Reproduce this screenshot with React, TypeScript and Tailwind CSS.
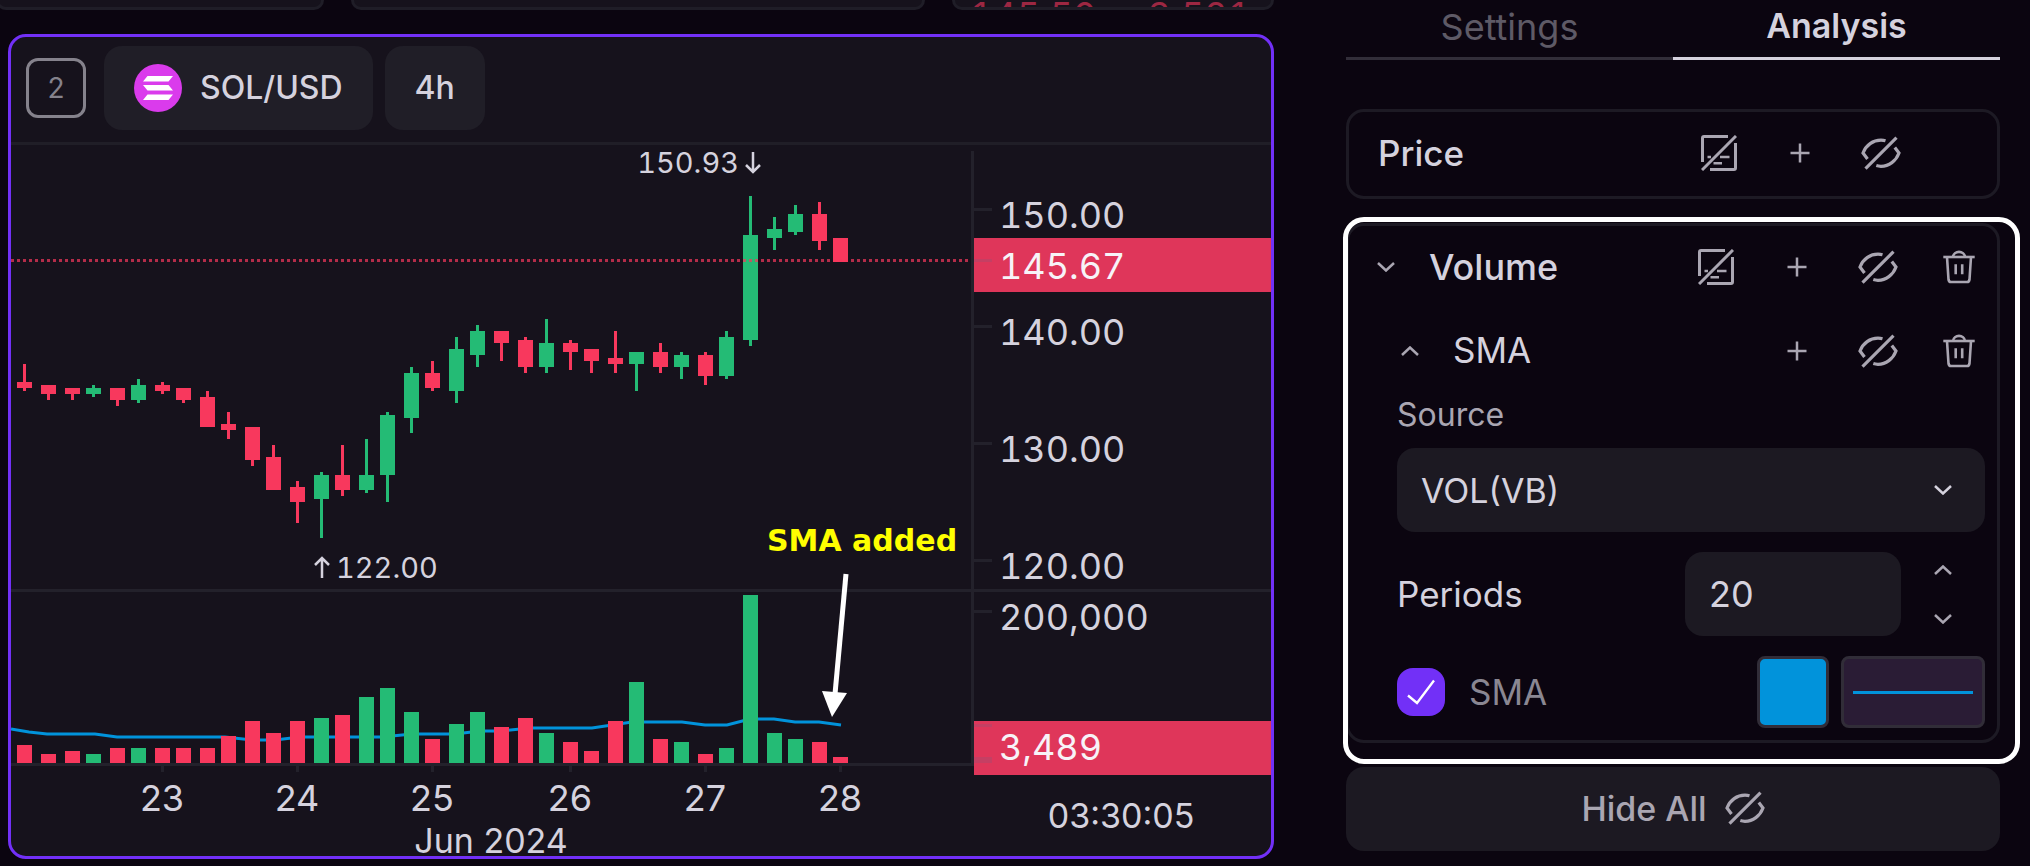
import { useState } from "react";
import type { ReactNode } from "react";

type Candle = {
  x: number;
  up: boolean;
  high: number;
  top: number;
  bottom: number;
  low: number;
  vol: number;
};

// x, direction, high, body top, body bottom, low, volume top
const rows: [number, 0 | 1, number, number, number, number, number][] = [
  [17, 0, 364, 382, 388, 391, 745],
  [41, 0, 385, 385, 394, 400, 754],
  [65, 0, 388, 388, 394, 400, 751],
  [86, 1, 385, 388, 394, 397, 754],
  [110, 0, 388, 388, 400, 406, 748],
  [131, 1, 379, 385, 400, 403, 748],
  [155, 0, 382, 385, 391, 394, 748],
  [176, 0, 388, 388, 400, 403, 748],
  [200, 0, 391, 397, 427, 427, 748],
  [221, 0, 412, 424, 430, 439, 736],
  [245, 0, 427, 427, 460, 466, 721],
  [266, 0, 445, 457, 490, 490, 733],
  [290, 0, 481, 487, 502, 523, 721],
  [314, 1, 472, 475, 499, 538, 718],
  [335, 0, 445, 475, 490, 496, 715],
  [359, 1, 439, 475, 490, 493, 697],
  [380, 1, 412, 415, 475, 502, 688],
  [404, 1, 367, 373, 418, 433, 712],
  [425, 0, 361, 373, 388, 391, 739],
  [449, 1, 337, 349, 391, 403, 724],
  [470, 1, 325, 331, 355, 367, 712],
  [494, 0, 331, 331, 343, 361, 727],
  [518, 0, 337, 340, 367, 373, 718],
  [539, 1, 319, 343, 367, 373, 733],
  [563, 0, 340, 343, 352, 370, 742],
  [584, 0, 349, 349, 361, 373, 751],
  [608, 0, 331, 358, 364, 373, 721],
  [629, 1, 352, 352, 364, 391, 682],
  [653, 0, 343, 352, 367, 373, 739],
  [674, 1, 352, 355, 367, 379, 742],
  [698, 0, 352, 355, 376, 385, 754],
  [719, 1, 331, 337, 376, 379, 748],
  [743, 1, 196, 235, 340, 346, 595],
  [767, 1, 217, 229, 238, 250, 733],
  [788, 1, 205, 214, 232, 235, 739],
  [812, 0, 202, 214, 241, 250, 742],
  [833, 0, 238, 238, 262, 262, 757],
];

const candles: Candle[] = rows.map(([x, up, high, top, bottom, low, vol]) => ({
  x,
  up: up === 1,
  high,
  top,
  bottom,
  low,
  vol,
}));

const smaPoints =
  "11,729 29,732 47,734 95,734 117,737 225,737 252,740 275,740 300,737 382,737 412,734 455,734 480,731 500,731 530,728 592,728 632,722 682,722 705,725 727,725 750,719 774,719 795,722 819,722 841,725";

const priceLabels = [
  { y: 209, label: "150.00" },
  { y: 326, label: "140.00" },
  { y: 443, label: "130.00" },
  { y: 560, label: "120.00" },
  { y: 611, label: "200,000" },
];

const days = [
  { x: 162, label: "23" },
  { x: 297, label: "24" },
  { x: 432, label: "25" },
  { x: 570, label: "26" },
  { x: 705, label: "27" },
  { x: 840, label: "28" },
];

const BASE = 763;

function Chart() {
  return (
    <svg viewBox="11 145 1260 711" className="block w-full" role="img" aria-label="SOL/USD 4h chart">
      {/* grid */}
      <g fill="#23212b">
        <rect x="971" y="151" width="3" height="612" />
        <rect x="11" y="589" width="1260" height="3" />
        <rect x="11" y="763" width="1260" height="3" />
        {days.map((d) => (
          <rect key={d.label} x={d.x - 1} y="766" width="3" height="6" />
        ))}
        {priceLabels.map((p) => (
          <rect key={p.label} x="974" y={p.y - 1} width="18" height="3" />
        ))}
      </g>

      <polyline points={smaPoints} fill="none" stroke="#0193db" strokeWidth="3" />

      {candles.map((c) => (
        <g key={c.x} fill={c.up ? "#24bb75" : "#f8385d"}>
          <rect x={c.x + 6} y={c.high} width="3" height={c.low - c.high} />
          <rect x={c.x} y={c.top} width="15" height={c.bottom - c.top} />
          <rect x={c.x} y={c.vol} width="15" height={BASE - c.vol} />
        </g>
      ))}

      <path d="M11 260.5H968" stroke="#f8385d" strokeOpacity="0.7" strokeWidth="3" strokeDasharray="3 3" />

      {/* last price / last volume */}
      <g fill="#df365a">
        <rect x="974" y="238" width="297" height="54" />
        <rect x="974" y="721" width="297" height="54" />
      </g>
      <g fill="#c53f63">
        <rect x="974" y="259" width="18" height="3" />
        <rect x="974" y="724" width="18" height="3" />
        <rect x="974" y="757" width="18" height="6" />
      </g>

      <g className="text-[36px] tabular-nums" fill="#d5d2de">
        {priceLabels.map((p) => (
          <text key={p.label} x="999" y={p.y + 19}>
            {p.label}
          </text>
        ))}
        <text x="999" y="279" fill="#f7f3f8">145.67</text>
        <text x="999" y="760" fill="#f7f3f8">3,489</text>
      </g>
      <g className="text-[36px]" fill="#d5d2de" textAnchor="middle">
        {days.map((d) => (
          <text key={d.label} x={d.x} y="811">
            {d.label}
          </text>
        ))}
      </g>
      <g className="text-[34px]" fill="#d5d2de" textAnchor="middle">
        <text x="491" y="853">Jun 2024</text>
        <text x="1121" y="828">03:30:05</text>
      </g>

      <g className="text-[29px] tabular-nums" fill="#d5d2de">
        <text x="739" y="173" textAnchor="end">150.93</text>
        <text x="336" y="578">122.00</text>
      </g>
      <g fill="none" stroke="#d5d2de" strokeWidth="2.5">
        <path d="M753 152V172M746 165L753 172L760 165" />
        <path d="M322 578V558M315 565L322 558L329 565" />
      </g>

      {/* annotation */}
      <text x="767" y="551" fill="#ffff00" className="font-['DejaVu_Sans'] text-[30px] font-bold">
        SMA added
      </text>
      <path d="M846 574L835 694" stroke="#fff" strokeWidth="5" />
      <path d="M822 691L847 693L832 717Z" fill="#fff" />
    </svg>
  );
}

function SolanaLogo() {
  return (
    <svg viewBox="0 0 48 48" className="size-12">
      <circle cx="24" cy="24" r="24" fill="#da3bec" />
      <path
        d="M13.5 12H39L34.5 17.5H9ZM9 21H34.5L39 26.5H13.5ZM13.5 30.5H39L34.5 36H9Z"
        fill="#fff"
      />
    </svg>
  );
}

function NoteOffIcon() {
  return (
    <svg viewBox="0 0 36 36" className="size-9" fill="none" stroke="currentColor" strokeWidth="3">
      <path d="M27 1.5H3Q1.5 1.5 1.5 3V27" />
      <path d="M34.5 8V33Q34.5 34.5 33 34.5H9" />
      <path d="M35 1L1 35" />
      <path d="M6.5 22H10M19 22H28.500M12.5 28.3H21" strokeWidth="2.5" />
    </svg>
  );
}

function PlusIcon() {
  return (
    <svg viewBox="0 0 36 36" className="size-9" fill="none" stroke="currentColor" strokeWidth="2.5">
      <path d="M8.5 18H27.5M18 8.5V27.5" />
    </svg>
  );
}

function EyeOffIcon() {
  return (
    <svg viewBox="0 0 40 36" className="h-9 w-10 shrink-0" fill="none" stroke="currentColor" strokeWidth="3.2">
      <path d="M6.5 24L2 18C5 10 12 5.2 20 5.2Q22.5 5.2 24.5 5.8" />
      <path d="M33.8 12.5L38 18C35 26 28 31.3 20 31.3Q17.5 31.3 15.3 30.6" />
      <path d="M35.5 2.7L4.5 33.7" />
    </svg>
  );
}

function TrashIcon() {
  return (
    <svg viewBox="0 0 36 36" className="size-9" fill="none" stroke="currentColor" strokeWidth="2.6">
      <path d="M2.3 8H33.7" />
      <path d="M12 8C12.5 1.2 23.5 1.2 24 8" />
      <path d="M6 8L7.5 30.5Q7.8 33 10 33H26Q28.2 33 28.5 30.5L30 8" />
      <path d="M14.7 15.3V25.3M21.2 15.3V25.3" />
    </svg>
  );
}

function Chevron({ up = false }: { up?: boolean }) {
  return (
    <svg viewBox="0 0 18 10" className="h-[10px] w-[18px]" fill="none" stroke="currentColor" strokeWidth="2.5">
      <path d={up ? "M1 9L9 1.5L17 9" : "M1 1L9 8.5L17 1"} />
    </svg>
  );
}

function IconButton({ label, children }: { label: string; children: ReactNode }) {
  return (
    <button aria-label={label} className="flex size-9 items-center justify-center">
      {children}
    </button>
  );
}

function Tab({ label, active, onClick }: { label: string; active: boolean; onClick: () => void }) {
  return (
    <button
      role="tab"
      aria-selected={active}
      onClick={onClick}
      className={`h-[60px] flex-1 border-b-3 pb-[11px] ${
        active
          ? "border-[#d5d2de] text-[34px] font-semibold text-[#d5d2de]"
          : "border-[#322e39] text-[36px] text-[#5e5a66]"
      }`}
    >
      {label}
    </button>
  );
}

function VolumeCard() {
  const [periods, setPeriods] = useState(20);
  const [checked, setChecked] = useState(true);

  return (
    <section className="relative mt-6 rounded-[18px] border-3 border-[#1d1a24]">
      <div className="flex h-[82px] items-center pr-5 pl-7">
        <button aria-label="Collapse volume" className="mr-[34px] text-[#aaa6b2]">
          <Chevron />
        </button>
        <h3 className="flex-1 text-[36px] font-medium">Volume</h3>
        <div className="flex gap-[45px] text-[#aaa6b2]">
          <IconButton label="Hide legend"><NoteOffIcon /></IconButton>
          <IconButton label="Add"><PlusIcon /></IconButton>
          <IconButton label="Hide"><EyeOffIcon /></IconButton>
          <IconButton label="Delete"><TrashIcon /></IconButton>
        </div>
      </div>

      <div className="flex h-[85px] items-center pr-5 pl-[52px]">
        <button aria-label="Collapse SMA" className="mr-[34px] text-[#aaa6b2]">
          <Chevron up />
        </button>
        <h4 className="flex-1 text-[35px]">SMA</h4>
        <div className="flex gap-[45px] text-[#aaa6b2]">
          <IconButton label="Add"><PlusIcon /></IconButton>
          <IconButton label="Hide"><EyeOffIcon /></IconButton>
          <IconButton label="Delete"><TrashIcon /></IconButton>
        </div>
      </div>

      <div className="flex flex-col pr-3 pb-3 pl-12">
        <label htmlFor="source" className="mb-[11px] text-[32px] leading-[44px] text-[#aaa6b2]">
          Source
        </label>
        <div className="relative">
          <select
            id="source"
            className="h-[84px] w-full appearance-none rounded-[18px] bg-[#1c1922] pl-6 text-[34px] outline-none"
          >
            <option>VOL(VB)</option>
          </select>
          <span className="pointer-events-none absolute inset-y-0 right-[33px] flex items-center">
            <Chevron />
          </span>
        </div>

        <div className="mt-5 flex items-center">
          <label htmlFor="periods" className="flex-1 text-[35px]">
            Periods
          </label>
          <input
            id="periods"
            type="text"
            inputMode="numeric"
            value={periods}
            onChange={(e) => setPeriods(Number(e.target.value) || 0)}
            className="h-[84px] w-[216px] rounded-[18px] bg-[#1c1922] pl-6 text-[36px] outline-none"
          />
          <div className="flex w-[84px] flex-col items-center gap-[39px] text-[#aaa6b2]">
            <button aria-label="Increase periods" onClick={() => setPeriods(periods + 1)}>
              <Chevron up />
            </button>
            <button aria-label="Decrease periods" onClick={() => setPeriods(periods - 1)}>
              <Chevron />
            </button>
          </div>
        </div>

        <div className="mt-5 flex items-center gap-3">
          <label className="flex flex-1 items-center gap-6 text-[35px] text-[#8a8792]">
            <span className="relative size-12">
              <input
                type="checkbox"
                checked={checked}
                onChange={(e) => setChecked(e.target.checked)}
                className="block size-12 appearance-none rounded-2xl bg-[#2a1c35] checked:bg-[#7230f7]"
              />
              {checked && (
                <svg viewBox="0 0 48 48" className="pointer-events-none absolute inset-0" fill="none">
                  <path d="M11 27.5L20 35L37 12.5" stroke="#fff" strokeWidth="2.3" />
                </svg>
              )}
            </span>
            SMA
          </label>
          <button aria-label="Line colour" className="size-[72px] rounded-lg border-3 border-[#312d38] bg-[#0193db]" />
          <button
            aria-label="Line style"
            className="flex h-[72px] w-36 items-center rounded-lg border-3 border-[#312d38] bg-[#2a1c35] px-[9px]"
          >
            <span className="h-[3px] w-full bg-[#0193db]" />
          </button>
        </div>
      </div>

      {/* highlight frame */}
      <div className="pointer-events-none absolute -top-[9px] -right-[23px] -bottom-[24px] -left-[6px] rounded-[21px] border-5 border-white" />
    </section>
  );
}

export default function App() {
  const [tab, setTab] = useState("Analysis");

  return (
    <div className="flex min-h-screen w-full gap-[72px] overflow-hidden bg-[#0b0510] pr-[30px] pl-2 font-['Inter','Liberation_Sans',sans-serif] text-[#d5d2de]">
      <main className="min-w-0 flex-1">
        {/* bottom edge of the row above */}
        <div className="flex h-[10px] gap-[27px]">
          <div className="-ml-3 w-[328px] rounded-b-[18px] border-3 border-t-0 border-[#1f1d27] bg-[#16121c]" />
          <div className="flex-1 rounded-b-[18px] border-3 border-t-0 border-[#1f1d27] bg-[#16121c]" />
          <div className="flex w-[322px] justify-between overflow-hidden rounded-b-[18px] border-3 border-t-0 border-[#1f1d27] bg-[#16121c] pr-5 pl-[15px] text-[36px] leading-[30px] text-[#9c2742] tabular-nums">
            <span>145.50</span>
            <span>3,521</span>
          </div>
        </div>

        <div className="mt-6 overflow-hidden rounded-[18px] border-3 border-[#7230f7] bg-[#16121c]">
          <header className="flex h-[108px] items-center border-b-3 border-[#201e27] pb-[3px] pl-[15px]">
            <span className="flex size-[60px] items-center justify-center rounded-xl border-3 border-[#85828c] text-[28px] text-[#85828c]">
              2
            </span>
            <button className="ml-[18px] flex h-[84px] items-center gap-[18px] rounded-[18px] bg-[#201e27] px-[30px] text-[32px] font-medium">
              <SolanaLogo />
              SOL/USD
            </button>
            <button className="ml-3 h-[84px] rounded-[18px] bg-[#201e27] px-[30px] text-[32px] font-medium">4h</button>
          </header>
          <Chart />
        </div>
      </main>

      <aside className="w-[654px] shrink-0">
        <div role="tablist" className="flex">
          {["Settings", "Analysis"].map((t) => (
            <Tab key={t} label={t} active={tab === t} onClick={() => setTab(t)} />
          ))}
        </div>

        <section className="mt-[49px] flex h-[90px] items-center rounded-[18px] border-3 border-[#1d1a24] pr-[98px] pb-[2px] pl-[29px]">
          <h3 className="flex-1 text-[35px] font-medium">Price</h3>
          <div className="flex gap-[45px] text-[#aaa6b2]">
            <IconButton label="Hide legend"><NoteOffIcon /></IconButton>
            <IconButton label="Add"><PlusIcon /></IconButton>
            <IconButton label="Hide"><EyeOffIcon /></IconButton>
          </div>
        </section>

        <VolumeCard />

        <button className="mt-6 flex h-[84px] w-full items-center justify-center gap-[18px] rounded-[18px] bg-[#1c1922] pb-[2px] text-[34px] font-medium text-[#aaa6b2]">
          Hide All
          <EyeOffIcon />
        </button>
      </aside>
    </div>
  );
}
